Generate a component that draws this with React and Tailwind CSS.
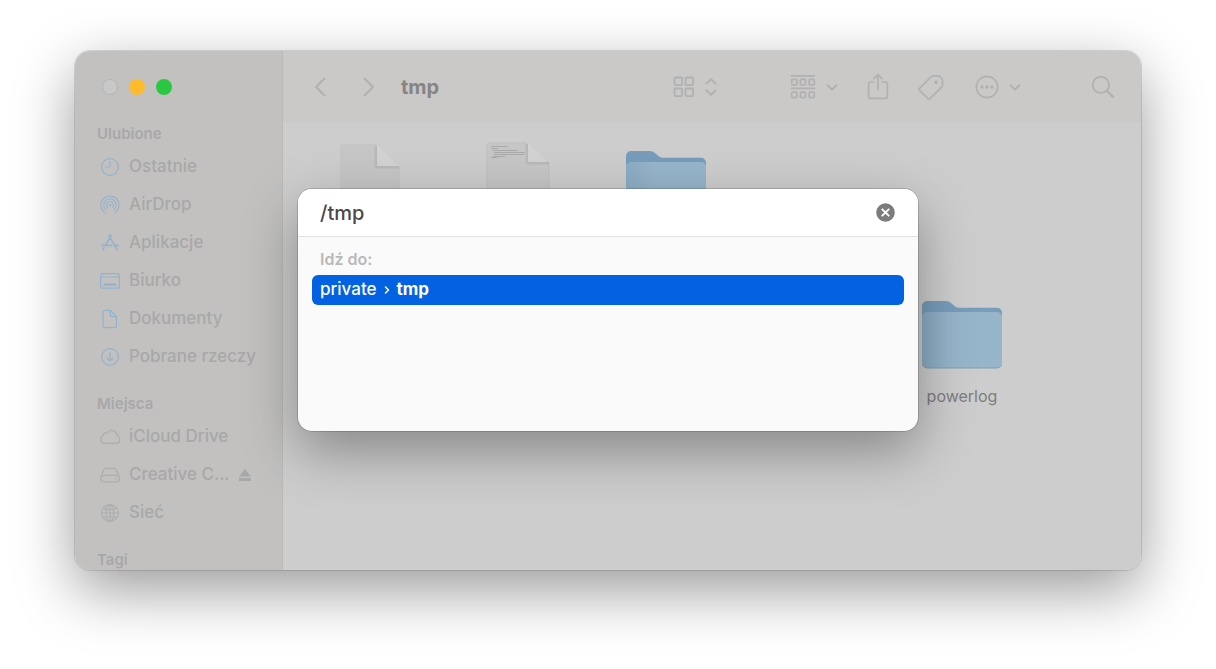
import { useState } from "react";

const Icon = ({ size = 22, width = 1.2, className = "", children }) => (
  <svg
    width={size}
    height={size}
    viewBox={`0 0 ${size} ${size}`}
    fill="none"
    stroke="currentColor"
    strokeWidth={width}
    strokeLinecap="round"
    strokeLinejoin="round"
    className={`shrink-0 ${className}`}
    aria-hidden="true"
  >
    {children}
  </svg>
);

const ClockIcon = () => (
  <Icon>
    <circle cx="11" cy="11" r="8.4" />
    <path d="M11 5.6V11H6.6" />
  </Icon>
);

const AirDropIcon = () => (
  <Icon width={1.1}>
    <path d="M6.1 18.6a9 9 0 1 1 9.8 0" />
    <path d="M7.2 15.9a6.2 6.2 0 1 1 7.6 0" />
    <path d="M8.7 13.6a3.5 3.5 0 1 1 4.6 0" />
    <circle cx="11" cy="11" r=".8" fill="currentColor" />
  </Icon>
);

const AppsIcon = () => (
  <Icon width={1.7}>
    <path d="M12.2 3.2 6.8 12.6M4.9 16l-1 1.7M9.7 3.2l8.2 14.5M2.8 13.4h9.6M16.2 13.4h3" />
  </Icon>
);

const DesktopIcon = () => (
  <Icon>
    <rect x="1.6" y="3.6" width="18.8" height="14.6" rx="2" />
    <path d="M1.6 7h18.8" />
    <path d="M5.6 14.6h10.8" strokeWidth="2.2" />
  </Icon>
);

const DocumentIcon = () => (
  <Icon>
    <path d="M6 2.4h5.4l6 6.2v9a2 2 0 0 1-2 2H6a2 2 0 0 1-2-2V4.4a2 2 0 0 1 2-2Z" />
    <path d="M11.4 2.6v4.6c0 .8.6 1.4 1.4 1.4h4.4" />
  </Icon>
);

const DownloadsIcon = () => (
  <Icon>
    <circle cx="11" cy="11" r="8.4" />
    <path d="M11 6.8v8M7.8 11.8l3.2 3.2 3.2-3.2" />
  </Icon>
);

const CloudIcon = () => (
  <Icon>
    <path d="M5.4 17.4a4.3 4.3 0 0 1-1-8.2 3.2 3.2 0 0 1 3.8-2.6 5.4 5.4 0 0 1 9.8 3 4 4 0 0 1-.8 7.8Z" />
  </Icon>
);

const DriveIcon = () => (
  <Icon>
    <path d="M2 12.4 4.9 5.6a2 2 0 0 1 1.8-1.2h8.6a2 2 0 0 1 1.8 1.2L20 12.4" />
    <rect x="1.6" y="11.4" width="18.8" height="6.4" rx="3" />
    <circle cx="16.8" cy="14.6" r=".4" fill="currentColor" />
  </Icon>
);

const GlobeIcon = () => (
  <Icon width={1.1}>
    <circle cx="11" cy="11" r="8.4" />
    <ellipse cx="11" cy="11" rx="4" ry="8.4" />
    <path d="M11 2.6v16.8M2.6 11h16.8M4.4 6.2c3.6 2 9.6 2 13.2 0M4.4 15.8c3.6-2 9.6-2 13.2 0" />
  </Icon>
);

const ChevronDown = () => (
  <Icon size={12} width={2}>
    <path d="m1.6 4.2 4.4 4.4 4.4-4.4" />
  </Icon>
);

const Folder = () => (
  <svg width="82" height="80" viewBox="0 0 82 80" aria-hidden="true">
    <defs>
      <linearGradient id="folderFront" x1="0" x2="1" y1="0" y2="0">
        <stop offset="0" stopColor="#8bacc3" />
        <stop offset=".35" stopColor="#96b5cb" />
        <stop offset="1" stopColor="#96b5cb" />
      </linearGradient>
    </defs>
    <path
      d="M1 14a5 5 0 0 1 5-5h18c3 0 4.6.8 6.6 2.6l2.6 2.200c1.4 1.2 2.8 1.9 5 1.9H76a5 5 0 0 1 5 5V71a5 5 0 0 1-5 5H6a5 5 0 0 1-5-5Z"
      fill="#779dbb"
    />
    <path d="M1 25a5 5 0 0 1 5-5h70a5 5 0 0 1 5 5v46a5 5 0 0 1-5 5H6a5 5 0 0 1-5-5Z" fill="url(#folderFront)" />
    <path d="M2 73.5A5 5 0 0 0 6 76h70a5 5 0 0 0 4-2.5" fill="none" stroke="#7f9fb6" />
  </svg>
);

const BlankFile = () => (
  <svg width="60" height="80" viewBox="0 0 60 80" aria-hidden="true">
    <path d="M3 3h33l23 22v55H1V5a2 2 0 0 1 2-2Z" fill="#c6c6c6" stroke="#c1c1c1" />
    <path d="M36 4v20a1 1 0 0 0 1 1h22" fill="none" stroke="#a9a9a9" strokeWidth="3" opacity=".45" />
    <path d="M37 3v20a1 1 0 0 0 1 1h21Z" fill="#d2d2d2" />
  </svg>
);

const TextFile = () => (
  <svg width="64" height="80" viewBox="0 0 64 80" aria-hidden="true">
    <path d="M3 1h37l23 21v58H1V3a2 2 0 0 1 2-2Z" fill="#c6c6c6" stroke="#bdbdbd" />
    <path
      d="M5 4.5h17M5 6.5h7M7 8.5h25M8 10.500h31M8 12.500h30M7 14.500h12M5 15.500h6"
      stroke="#aaa"
      fill="none"
    />
    <path d="M41 2v18a1 1 0 0 0 1 1h21" fill="none" stroke="#a9a9a9" strokeWidth="3" opacity=".45" />
    <path d="M42 1v18a1 1 0 0 0 1 1h19Z" fill="#d2d2d2" />
  </svg>
);

const favourites = [
  { name: "Ostatnie", icon: ClockIcon },
  { name: "AirDrop", icon: AirDropIcon },
  { name: "Aplikacje", icon: AppsIcon },
  { name: "Biurko", icon: DesktopIcon },
  { name: "Dokumenty", icon: DocumentIcon },
  { name: "Pobrane rzeczy", icon: DownloadsIcon },
];

const places = [
  { name: "iCloud Drive", icon: CloudIcon },
  { name: "Creative C...", icon: DriveIcon, eject: true },
  { name: "Sieć", icon: GlobeIcon },
];

const SidebarSection = ({ title, items, iconColor }) => (
  <section className="mb-4">
    <h2 className="h-[26px] text-[15px] leading-6 font-semibold">{title}</h2>
    <ul>
      {items.map(({ name, icon: ItemIcon, eject }) => (
        <li key={name} className="flex h-[38px] items-center">
          <a href="#" className="flex items-center gap-2 pl-0.5 whitespace-nowrap">
            <span className={iconColor}>
              <ItemIcon />
            </span>
            {name}
          </a>
          {eject && (
            <button type="button" aria-label="Wysuń" className="ml-2">
              <svg width="14" height="14" viewBox="0 0 14 14" fill="currentColor" aria-hidden="true">
                <path d="M7 1 13 8.4H1ZM1 10h12v3H1Z" />
              </svg>
            </button>
          )}
        </li>
      ))}
    </ul>
  </section>
);

const Sidebar = () => (
  <aside className="flex w-[208px] shrink-0 flex-col overflow-hidden border-r border-[#b9b9b8] bg-[#c2c1c0] pl-[22px] text-[17px] font-medium text-[#a8a8a8]">
    <div className="flex h-[71px] shrink-0 items-center gap-[11px] pl-[5px]">
      <button type="button" aria-label="Zamknij" className="size-4 rounded-full border border-[#b5b5b5] bg-[#c9c8c8]" />
      <button type="button" aria-label="Minimalizuj" className="size-4 rounded-full bg-[#fdbc2e]" />
      <button type="button" aria-label="Powiększ" className="size-4 rounded-full bg-[#2ac840]" />
    </div>
    <nav>
      <SidebarSection title="Ulubione" items={favourites} iconColor="text-[#93b2cc]" />
      <SidebarSection title="Miejsca" items={places} iconColor="text-[#adadad]" />
      <SidebarSection title="Tagi" items={[]} iconColor="text-[#adadad]" />
    </nav>
  </aside>
);

const Toolbar = () => (
  <header className="flex h-[71px] shrink-0 items-center bg-[#cac9c8] pr-[26px] pl-[26px] text-[#b1b1b1]">
    <button type="button" aria-label="Wstecz">
      <Icon width={2}>
        <path d="M15.5 2.5 7 11l8.5 8.5" />
      </Icon>
    </button>
    <button type="button" aria-label="Dalej" className="ml-[26px]">
      <Icon width={2}>
        <path d="m7.5 2.5 8.5 8.5-8.5 8.5" />
      </Icon>
    </button>
    <h1 className="ml-[22px] text-xl font-bold text-[#858585]">tmp</h1>

    <button type="button" aria-label="Widok" className="ml-auto flex items-center gap-2.5">
      <Icon width={1.8}>
        <rect x="1.5" y="1.5" width="7.6" height="7.6" rx="1" />
        <rect x="12.5" y="1.5" width="7.6" height="7.6" rx="1" />
        <rect x="1.5" y="12.5" width="7.6" height="7.6" rx="1" />
        <rect x="12.5" y="12.5" width="7.6" height="7.6" rx="1" />
      </Icon>
      <svg width="12" height="20" viewBox="0 0 12 20" fill="none" stroke="currentColor" strokeWidth="2" strokeLinecap="round" strokeLinejoin="round" aria-hidden="true">
        <path d="M1.5 6.6 6 2.2l4.5 4.4M1.5 13.4 6 17.8l4.5-4.4" />
      </svg>
    </button>
    <button type="button" aria-label="Grupowanie" className="ml-[73px] flex items-center gap-2.5">
      <Icon size={26} width={1.7}>
        <path d="M1.5 1.8h23M1.5 14.4h23" />
        <rect x="1.7" y="5.4" width="5.2" height="5.4" rx="1" />
        <rect x="10.4" y="5.4" width="5.2" height="5.4" rx="1" />
        <rect x="19.1" y="5.4" width="5.2" height="5.4" rx="1" />
        <rect x="1.7" y="18.2" width="5.2" height="5.4" rx="1" />
        <rect x="10.4" y="18.2" width="5.2" height="5.4" rx="1" />
        <rect x="19.1" y="18.2" width="5.2" height="5.4" rx="1" />
      </Icon>
      <ChevronDown />
    </button>
    <button type="button" aria-label="Udostępnij" className="ml-[27px]">
      <Icon size={26} width={1.7}>
        <path d="M8.600 8H5.600a2 2 0 0 0-2 2v12.400a2 2 0 0 0 2 2h14.800a2 2 0 0 0 2-2V10a2 2 0 0 0-2-2h-3M13 15.600V1M9 4.600l4-4 4 4" />
      </Icon>
    </button>
    <button type="button" aria-label="Tagi" className="ml-[27px]">
      <Icon size={26} width={1.7}>
        <path d="M1.6 14.2 13.3 2.6a3 3 0 0 1 2-.8h4.8c.7 0 1.200.2 1.7.7l2 2c.5.5.7 1 .7 1.7v4.6c0 .8-.3 1.5-.8 2L12.3 24.4c-.9.9-1.7.9-2.6 0l-8-7.8c-.9-.8-.9-1.6-.1-2.4Z" />
        <circle cx="18" cy="8.2" r=".9" fill="currentColor" />
      </Icon>
    </button>
    <button type="button" aria-label="Czynności" className="ml-[31px] flex items-center gap-2.5">
      <Icon size={24} width={1.7}>
        <circle cx="12" cy="12" r="10.6" />
        <circle cx="7" cy="12" r=".8" fill="currentColor" />
        <circle cx="12" cy="12" r=".8" fill="currentColor" />
        <circle cx="17" cy="12" r=".8" fill="currentColor" />
      </Icon>
      <ChevronDown />
    </button>
    <button type="button" aria-label="Szukaj" className="ml-[70px]">
      <Icon size={24} width={1.9}>
        <circle cx="9.9" cy="9.9" r="8.2" />
        <path d="m16 16 6 6" strokeWidth="2.4" />
      </Icon>
    </button>
  </header>
);

const FileGrid = () => (
  <div className="grid flex-1 auto-rows-[150px] grid-cols-[repeat(5,148px)] justify-items-center bg-[#cdcdcd] pt-5 pl-[13px]">
    <BlankFile />
    <TextFile />
    <Folder />
    <figure className="col-start-5 row-start-2 flex flex-col items-center">
      <Folder />
      <figcaption className="mt-3 text-base leading-6 text-[#7d7d7d]">powerlog</figcaption>
    </figure>
  </div>
);

const GoToDialog = () => {
  const [path, setPath] = useState("/tmp");

  return (
    <div
      role="dialog"
      aria-label="Idź do"
      className="w-[620px] overflow-hidden rounded-[14px] bg-[#fafafa] shadow-[0_0_0_1px_rgba(0,0,0,0.15),0_20px_54px_rgba(0,0,0,0.34)]"
    >
      <div className="flex h-12 items-center border-b border-[#e2e2e2] bg-white pr-[23px] pl-[22px]">
        <input
          type="text"
          aria-label="Ścieżka"
          value={path}
          onChange={(e) => setPath(e.target.value)}
          className="min-w-0 flex-1 text-xl font-medium text-[#484848] outline-none"
        />
        <button type="button" aria-label="Wyczyść" onClick={() => setPath("")}>
          <svg width="19" height="19" viewBox="0 0 19 19" aria-hidden="true">
            <circle cx="9.5" cy="9.5" r="9.3" fill="#7c7c7c" />
            <path d="m6.3 6.3 6.4 6.4m0-6.4-6.4 6.4" stroke="#fff" strokeWidth="1.9" strokeLinecap="round" />
          </svg>
        </button>
      </div>
      <div className="min-h-[194px] px-[14px] pt-[10px]">
        <h2 className="h-7 pl-2 text-base leading-6 font-semibold text-[#b9b9b9]">Idź do:</h2>
        <button
          type="button"
          className="flex h-[30px] w-full items-center rounded-md bg-[#0262e2] px-2 text-[17px] font-medium text-white"
        >
          private
          <Icon size={8} width={1.5} className="mx-1.5">
            <path d="m2.5 1 3 3-3 3" />
          </Icon>
          <strong className="font-bold">tmp</strong>
        </button>
      </div>
    </div>
  );
};

const App = () => (
  <div className="flex h-screen bg-white px-[75px] pt-[51px] pb-[99px] font-['Inter','Noto_Sans',sans-serif]">
    <div className="relative flex min-w-0 flex-1 overflow-hidden rounded-[15px] shadow-[0_0_0_1px_rgba(0,0,0,0.12),0_20px_60px_rgba(0,0,0,0.4)]">
      <Sidebar />
      <main className="flex min-w-0 flex-1 flex-col">
        <Toolbar />
        <FileGrid />
      </main>
      <div className="absolute inset-x-0 top-[138px] flex justify-center">
        <GoToDialog />
      </div>
    </div>
  </div>
);

export default App;
